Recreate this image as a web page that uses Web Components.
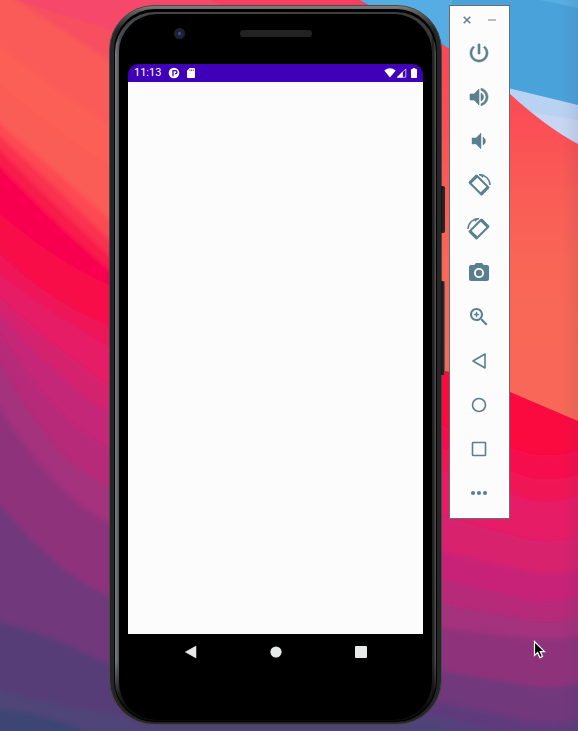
<!DOCTYPE html>
<html lang="en">
<head>
<meta charset="utf-8">
<title>Android Emulator</title>
<style>
html, body { margin: 0; height: 100%; }
body { font-family: Roboto, "Noto Sans", sans-serif; background: #8f337c; overflow: hidden; }
</style>
</head>
<body>
<emulator-desktop>
  <phone-device>
    <status-bar time="11:13"></status-bar>
  </phone-device>
  <emulator-toolbar>
    <tool-button icon="power" label="Power"></tool-button>
    <tool-button icon="volumeUp" label="Volume up"></tool-button>
    <tool-button icon="volumeDown" label="Volume down"></tool-button>
    <tool-button icon="rotateLeft" label="Rotate left"></tool-button>
    <tool-button icon="rotateRight" label="Rotate right"></tool-button>
    <tool-button icon="camera" label="Take screenshot"></tool-button>
    <tool-button icon="zoom" label="Enter zoom mode"></tool-button>
    <tool-button icon="back" label="Back"></tool-button>
    <tool-button icon="home" label="Home"></tool-button>
    <tool-button icon="overview" label="Overview"></tool-button>
    <tool-button icon="more" label="More"></tool-button>
  </emulator-toolbar>
</emulator-desktop>
<script>
const rotateShape = `
  <path fill-rule="evenodd" transform="rotate(45 12 12)" d="M3.900 6H20.100Q21.600 6 21.600 7.500V16.500Q21.600 18 20.100 18H3.900Q2.400 18 2.400 16.500V7.500Q2.400 6 3.900 6ZM5.600 8V16H18.400V8Z"/>
  <path d="M12 1.700A10.500 10.500 0 0 1 23 12" fill="none" stroke="currentColor" stroke-width="1.500"/>
  <path d="M12 1 L16.500 1.800 L15.800 5Z"/>`;

const ICONS = {
  power: '<path d="M13 3h-2v10h2V3zm4.830 2.170l-1.420 1.420C17.990 7.860 19 9.810 19 12c0 3.870-3.130 7-7 7s-7-3.130-7-7c0-2.190 1.010-4.140 2.580-5.420L6.170 5.170C4.230 6.820 3 9.260 3 12c0 4.970 4.030 9 9 9s9-4.030 9-9c0-2.740-1.230-5.180-3.170-6.830z" stroke="currentColor" stroke-width=".6"/>',
  volumeUp: '<path d="M3 9v6h4l5 5V4L7 9H3zm13.500 3c0-1.770-1.020-3.290-2.500-4.030v8.050c1.480-.730 2.500-2.250 2.500-4.020zM14 3.230v2.060c2.890.860 5 3.540 5 6.710s-2.110 5.850-5 6.710v2.060c4.010-.910 7-4.490 7-8.770s-2.990-7.860-7-8.770z" stroke="currentColor" stroke-width=".6"/>',
  volumeDown: '<path d="M18.500 12c0-1.770-1.020-3.290-2.500-4.030v8.050c1.480-.730 2.500-2.250 2.500-4.020zM5 9v6h4l5 5V4L9 9H5z" stroke="currentColor" stroke-width=".4"/>',
  rotateLeft: rotateShape,
  rotateRight: `<g transform="translate(24 0) scale(-1 1)">${rotateShape}</g>`,
  camera: '<circle cx="12" cy="12" r="3.200"/><path d="M9 2L7.170 4H4c-1.100 0-2 .9-2 2v12c0 1.100.9 2 2 2h16c1.100 0 2-.9 2-2V6c0-1.100-.9-2-2-2h-3.170L15 2H9zm3 15c-2.760 0-5-2.240-5-5s2.240-5 5-5 5 2.240 5 5-2.240 5-5 5z"/>',
  zoom: '<path d="M15.500 14h-.790l-.280-.270C15.410 12.590 16 11.110 16 9.500 16 5.910 13.090 3 9.500 3S3 5.910 3 9.500 5.910 16 9.500 16c1.610 0 3.090-.590 4.230-1.570l.270.280v.790l5 4.990L20.490 19l-4.990-5zm-6 0C7.010 14 5 11.990 5 9.500S7.010 5 9.500 5 14 7.010 14 9.500 11.990 14 9.500 14z"/><path d="M12 10h-2v2H9v-2H7V9h2V7h1v2h2v1z" stroke="currentColor" stroke-width=".4"/>',
  back: '<path d="M6 12L18 5v14z" fill="none" stroke="currentColor" stroke-width="1.600" stroke-linejoin="round"/>',
  home: '<circle cx="12" cy="12" r="6.500" fill="none" stroke="currentColor" stroke-width="1.600"/>',
  overview: '<rect x="5.500" y="5.500" width="13" height="13" rx=".6" fill="none" stroke="currentColor" stroke-width="1.600"/>',
  more: '<circle cx="6" cy="12" r="2.100"/><circle cx="12" cy="12" r="2.100"/><circle cx="18" cy="12" r="2.100"/>'
};

class WallpaperArt extends HTMLElement {
  constructor() {
    super();
    /* Each band is [colour, y at the left edge, y midway, y at the right edge] and fills everything below. */
    const left = [
      ['#f7505f', -40, 4, 28], ['#fa5a59', -10, 26, 62], ['#fb5f55', 46, 88, 125],
      ['#fa5c56', 86, 130, 168], ['#fc4a53', 124, 172, 222], ['#fb3350', 136, 188, 242], ['#f81c4c', 150, 205, 258],
      ['#f80650', 166, 222, 272], ['#f80848', 214, 256, 286], ['#ee1258', 254, 298, 326],
      ['#e61a66', 274, 314, 348], ['#d4226e', 298, 346, 388], ['#c42878', 314, 372, 415], ['#b62b79', 334, 408, 450],
      ['#a4307b', 362, 446, 487], ['#8f337c', 408, 482, 524], ['#71387c', 504, 562, 597],
      ['#563c78', 622, 640, 666], ['#4f4478', 690, 704, 712], ['#3c4474', 709, 720, 744]
    ].map(([c, a, m, b]) => `<path fill="${c}" d="M-20 ${a - 12}L0 ${a}Q56 ${2 * m - (a + b) / 2} 112 ${b}L300 ${b + 80}V790H-20Z"/>`).join('');
    const right = [
      ['#f60f4e', 426, 456], ['#f01456', 448, 480], ['#e61a66', 470, 502],
      ['#d8206e', 516, 542], ['#c82478', 552, 574], ['#b62b79', 580, 602],
      ['#a4307b', 604, 622], ['#8f337c', 628, 640], ['#71387c', 671, 688],
      ['#613b7b', 702, 724], ['#54427c', 716, 742]
    ].map(([c, a, b]) => `<path fill="${c}" d="M276 ${a - 20}L442 ${a}L530 ${b - 2}Q562 ${b + 2} 582 ${b - 7}L620 ${b - 24}V790H276Z"/>`).join('');
    this.attachShadow({ mode: 'open' }).innerHTML = `
      <style>
        :host { display: block; }
        svg { display: block; width: 100%; height: 100%; }
      </style>
      <svg viewBox="0 0 578 731" preserveAspectRatio="none" aria-hidden="true">
        <defs>
          <filter id="soft" x="-10%" y="-10%" width="120%" height="120%"><feGaussianBlur stdDeviation="2"/></filter>
          <linearGradient id="coral" x1="0" y1="0" x2="0" y2="1">
            <stop offset="0" stop-color="#fc4453"/><stop offset=".25" stop-color="#fb4e55"/>
            <stop offset=".42" stop-color="#fa5c56"/><stop offset=".6" stop-color="#f96656"/>
            <stop offset="1" stop-color="#f86858"/>
          </linearGradient>
          <linearGradient id="edge"><stop offset="0" stop-color="#404060" stop-opacity="0"/><stop offset="1" stop-color="#404060" stop-opacity=".1"/></linearGradient>
          <clipPath id="leftHalf"><path d="M0 0H276V731H0Z"/></clipPath>
          <clipPath id="rightHalf"><path d="M276 0H578V731H276Z"/></clipPath>
        </defs>
        <path fill="#f5486a" d="M0 0H578V731H0Z"/>
        <g clip-path="url(#leftHalf)"><g filter="url(#soft)">${left}</g></g>
        <path fill="#f5486a" d="M16 0H450V30H112Z"/>
        <path fill="#f83e62" d="M210 0H450V30H270Z"/>
        <path fill="#4aa2da" d="M360 0H578V150H520L442 44Z"/>
        <path fill="#55ade3" d="M360 0H452V60L442 44Z"/>
        <path fill="#58aee2" d="M540 0H578V8Z"/>
        <path fill="#bad2f2" d="M500 86L578 105V150H530Z"/>
        <path fill="#c8d6f4" d="M530 112L578 120V150H540Z"/>
        <path fill="url(#coral)" d="M276 20L442 44Q480 68 510 94Q546 127 578 144V430H276Z"/>
        <path fill="#fb0a40" d="M276 340L442 370Q476 378 510 392L578 421V731H276Z"/>
        <g clip-path="url(#rightHalf)"><g filter="url(#soft)">${right}</g></g>
        <path fill="#4f4478" d="M150 722H440V731H150Z"/>
        <path fill="url(#edge)" d="M562 0H578V731H562Z"/>
      </svg>`;
  }
}
customElements.define('wallpaper-art', WallpaperArt);

class StatusBar extends HTMLElement {
  constructor() {
    super();
    this.attachShadow({ mode: 'open' }).innerHTML = `
      <style>
        :host { display: flex; align-items: center; height: 18px; padding: 0 5px 0 6px; background: #4000b8; color: #fff; font-size: 11px; line-height: 18px; border-radius: 11px 11px 0 0; }
        svg { display: block; height: 12px; fill: currentColor; }
        time { margin-right: 7px; }
        .card { margin-left: 5px; }
        .end { display: flex; margin-left: auto; }
        .battery { margin-left: 3px; }
      </style>
      <time></time>
      <svg width="12" viewBox="0 0 12 12" aria-hidden="true"><circle cx="6" cy="6" r="5.300"/><path fill="none" stroke="#4000b8" stroke-width="1.300" d="M5 9.200V3.700H7.300Q8.900 3.700 8.900 5.200Q8.900 6.700 7 6.700"/></svg>
      <svg class="card" width="12" viewBox="0 0 12 12" aria-hidden="true"><path fill-rule="evenodd" d="M4.700 1H9.200Q10 1 10 1.800V10.200Q10 11 9.200 11H2.800Q2 11 2 10.200V3.800ZM4.600 2.600V4H5.300V2.600ZM6.200 2.600V4H6.900V2.600ZM7.800 2.600V4H8.500V2.600Z"/></svg>
      <span class="end">
        <svg width="12" viewBox="0 0 12 12" aria-hidden="true"><path d="M.3 3.500Q6-1.100 11.700 3.500L6 10.500Z"/></svg>
        <svg width="11" viewBox="0 0 11 12" aria-hidden="true"><path fill="none" stroke="currentColor" stroke-width=".7" d="M1.500 10.200L9.800 1.900V10.200Z"/><path d="M.7 10.500L6.800 4.400V10.500Z"/></svg>
        <svg class="battery" width="8" viewBox="0 0 8 12" aria-hidden="true"><path d="M2.800 1H5.200V2H6.300Q7 2 7 2.700V10.300Q7 11 6.300 11H1.700Q1 11 1 10.300V2.700Q1 2 1.700 2H2.800Z"/></svg>
      </span>`;
  }
  connectedCallback() {
    this.shadowRoot.querySelector('time').textContent = this.getAttribute('time');
  }
}
customElements.define('status-bar', StatusBar);

class PhoneDevice extends HTMLElement {
  constructor() {
    super();
    this.attachShadow({ mode: 'open' }).innerHTML = `
      <style>
        :host { display: flex; position: relative; }
        div { box-sizing: border-box; }
        .shell, .groove, .rim, .face { display: flex; flex: 1; }
        .shell { border: 1px solid #484848; border-radius: 45px; padding: 3px 4px 2px; background: linear-gradient(#808080 0, #606060 5px, #262626 24px); }
        .groove { border-radius: 41px; padding: 3px 1px 1px; background: #000; }
        .rim { border-radius: 40px; padding: 2px 4px 1px; background: linear-gradient(transparent calc(100% - 60px), #0c0c0c calc(100% - 14px)), linear-gradient(to right, #7a8086 0, #44484c 5px, #3a3a3a calc(100% - 5px), #1c1c1c calc(100% - 3px), #555 100%); }
        .face { flex-direction: column; border-radius: 38px; padding: 0 9px; background: #000; }
        .brow { display: grid; grid-template-columns: 1fr auto 1fr; align-items: center; height: 50px; padding-bottom: 12px; }
        .lens { width: 11px; height: 11px; margin-left: 46px; border-radius: 50%; background: radial-gradient(circle, #34509a 0 1px, #1b2140 2px 3px, #222 4px); }
        .speaker { width: 72px; height: 7px; border-radius: 4px; background: #222; }
        main { flex: 1; background: #fcfcfc; }
        nav { display: flex; justify-content: center; align-items: center; gap: 61px; height: 36px; margin-bottom: 50px; }
        nav button { display: grid; place-items: center; width: 24px; height: 24px; padding: 0; border: 0; background: none; color: #e9ebea; }
        nav svg { width: 14px; height: 14px; fill: currentColor; }
        .key { position: absolute; right: -3px; width: 4px; border-radius: 0 2px 2px 0; background: linear-gradient(to right, #111, #2e2e2e); border: 1px solid #222; border-left: 0; }
        .lock { top: 181px; height: 47px; }
        .volume { top: 276px; height: 94px; border-right-color: #555; }
      </style>
      <div class="key lock"></div>
      <div class="key volume"></div>
      <div class="shell"><div class="groove"><div class="rim"><div class="face">
        <div class="brow"><div class="lens"></div><div class="speaker"></div></div>
        <slot></slot>
        <main></main>
        <nav>
          <button aria-label="Back"><svg viewBox="0 0 14 14"><path d="M1.300 7L12 1V13Z" stroke="currentColor" stroke-width=".5" stroke-linejoin="round"/></svg></button>
          <button aria-label="Home"><svg viewBox="0 0 14 14"><circle cx="7" cy="7" r="5.600"/></svg></button>
          <button aria-label="Overview"><svg viewBox="0 0 14 14"><rect x="1" y="1" width="12" height="12" rx="1"/></svg></button>
        </nav>
      </div></div></div></div>`;
  }
}
customElements.define('phone-device', PhoneDevice);

class ToolButton extends HTMLElement {
  constructor() {
    super();
    this.attachShadow({ mode: 'open' }).innerHTML = `
      <style>
        :host { display: block; height: 44px; }
        button { display: grid; place-items: center; width: 100%; height: 100%; padding: 0; border: 0; background: none; color: #5a7f8f; }
        svg { width: 24px; height: 24px; fill: currentColor; overflow: visible; }
      </style>
      <button></button>`;
  }
  connectedCallback() {
    const button = this.shadowRoot.querySelector('button');
    button.setAttribute('aria-label', this.getAttribute('label'));
    button.innerHTML = `<svg viewBox="0 0 24 24">${ICONS[this.getAttribute('icon')]}</svg>`;
  }
}
customElements.define('tool-button', ToolButton);

class EmulatorToolbar extends HTMLElement {
  constructor() {
    super();
    this.attachShadow({ mode: 'open' }).innerHTML = `
      <style>
        :host { display: block; box-sizing: border-box; width: 61px; padding: 2px 1px 3px 0; border: 1px solid #6a6d70; background: #fcfcfc; }
        header { display: flex; justify-content: center; gap: 13px; height: 23px; }
        header button { width: 12px; height: 23px; display: grid; place-items: center; padding: 0; border: 0; background: none; color: #66808c; }
        svg { width: 12px; height: 12px; fill: none; stroke: currentColor; stroke-width: 1.600; }
        .minimize { color: #9fb1b9; }
      </style>
      <header>
        <button aria-label="Close"><svg viewBox="0 0 12 12"><path d="M2.700 2.700L9.300 9.300M9.300 2.700L2.700 9.300"/></svg></button>
        <button class="minimize" aria-label="Minimize"><svg viewBox="0 0 12 12"><path d="M2 6H10"/></svg></button>
      </header>
      <slot></slot>`;
  }
}
customElements.define('emulator-toolbar', EmulatorToolbar);

class EmulatorDesktop extends HTMLElement {
  constructor() {
    super();
    this.attachShadow({ mode: 'open' }).innerHTML = `
      <style>
        :host { display: flex; box-sizing: border-box; position: relative; min-height: 100vh; padding: 5px 68px 6px 109px; gap: 7px; align-items: flex-start; }
        wallpaper-art { position: absolute; inset: 0; }
        ::slotted(*) { position: relative; }
        ::slotted(phone-device) { flex: 1; align-self: stretch; }
        .pointer { position: absolute; left: 533px; top: 640px; width: 14px; height: 20px; }
      </style>
      <wallpaper-art></wallpaper-art>
      <slot></slot>
      <svg class="pointer" viewBox="0 0 14 20" aria-hidden="true"><path d="M1.500 1.500V15.500L4.700 12.600L6.900 17.600L9.500 16.500L7.300 11.600H11.500Z" fill="#000" stroke="#fff" stroke-width="1.200"/></svg>`;
  }
}
customElements.define('emulator-desktop', EmulatorDesktop);
</script>
</body>
</html>
